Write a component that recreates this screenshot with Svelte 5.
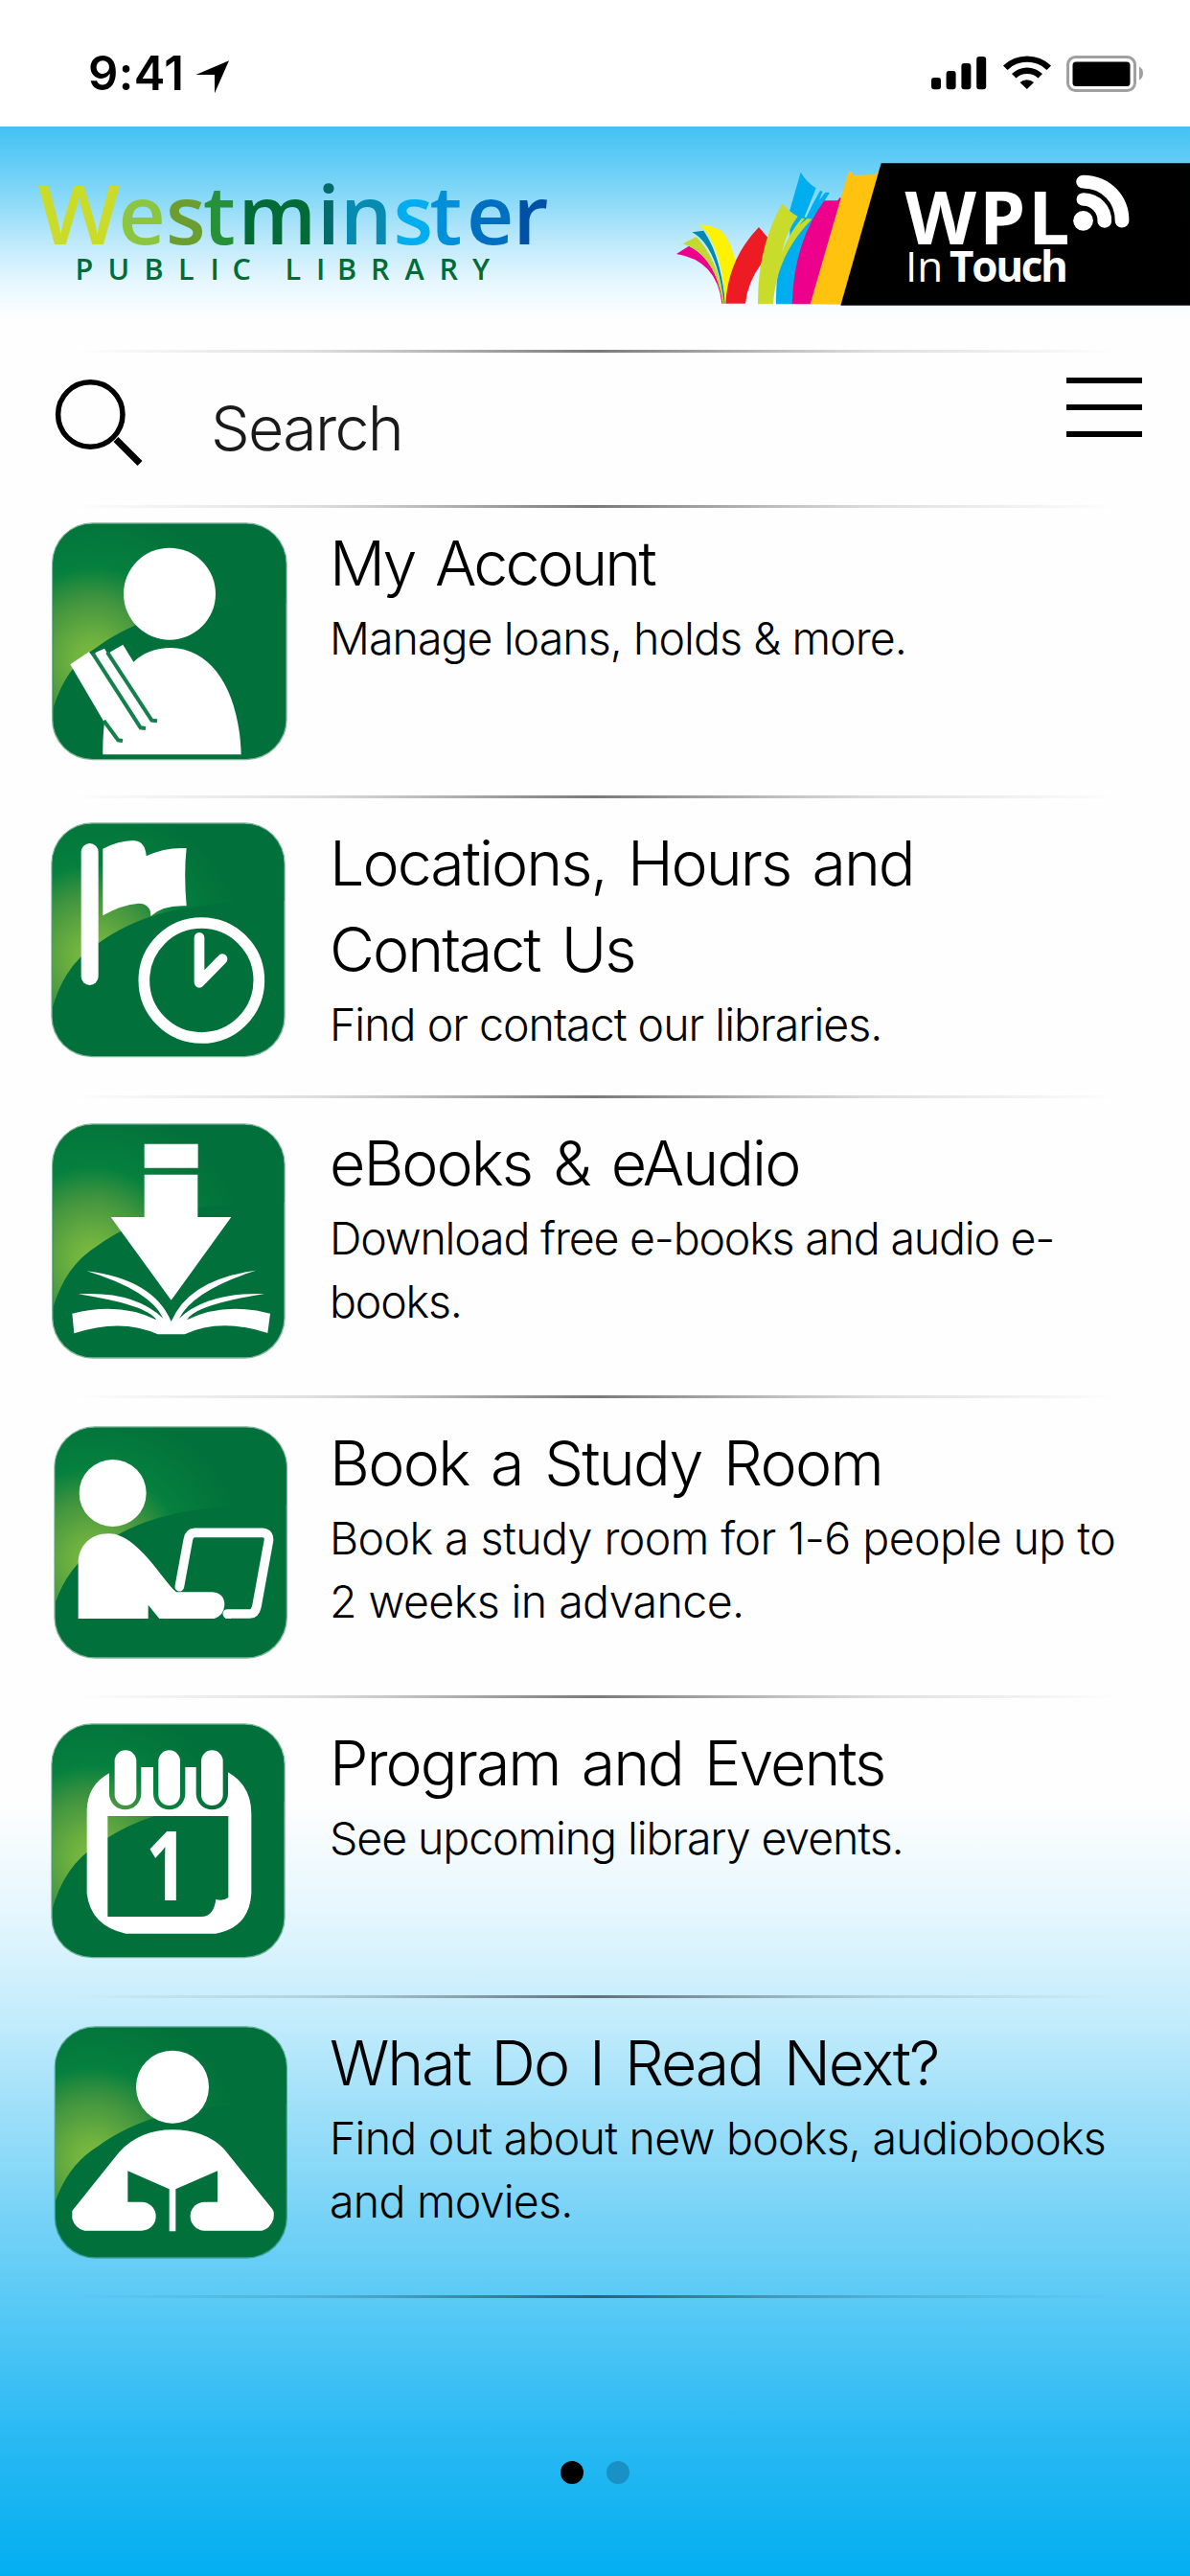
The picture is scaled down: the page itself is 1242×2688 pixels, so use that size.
<script lang="ts">
	type IconName = 'account' | 'location' | 'download' | 'study' | 'calendar' | 'reader';

	interface MenuItem {
		icon: IconName;
		title: string;
		text: string;
		tracking: [number, number];
		shift: number;
		box: [number, number, number, number];
	}

	// tracking: letter spacing of title and text; shift: vertical start of the artwork;
	// box: x, y, width, height of the tile
	const items: MenuItem[] = [
		{ icon: 'account', title: 'My Account', text: 'Manage loans, holds & more.', tracking: [-2.8, -0.95], shift: 0, box: [42, 46, 737, 744] },
		{ icon: 'location', title: 'Locations, Hours and Contact Us', text: 'Find or contact our libraries.', tracking: [-2, -1], shift: 9, box: [40, 55, 733, 735] },
		{ icon: 'download', title: 'eBooks & eAudio', text: 'Download free e-books and audio e-books.', tracking: [-2, -1.2], shift: 3, box: [42, 52, 731, 736] },
		{ icon: 'study', title: 'Book a Study Room', text: 'Book a study room for 1-6 people up to 2 weeks in advance.', tracking: [-1.7, -0.58], shift: -3, box: [49, 55, 731, 727] },
		{ icon: 'calendar', title: 'Program and Events', text: 'See upcoming library events.', tracking: [-2, -1.1], shift: 6, box: [40, 55, 733, 735] },
		{ icon: 'reader', title: 'What Do I Read Next?', text: 'Find out about new books, audiobooks and movies.', tracking: [-2.1, -0.76], shift: 0, box: [50, 58, 730, 727] }
	];

	const letters = [
		{ char: 'e', x: 123.5, color: '#8cc63f' },
		{ char: 's', x: 173, color: '#6b9e2e' },
		{ char: 't', x: 212, color: '#279139' },
		{ char: 'm', x: 248.5, color: '#026b36' },
		{ char: 'i', x: 331, color: '#036c6b' },
		{ char: 'n', x: 355, color: '#078bb0' },
		{ char: 's', x: 410.5, color: '#00aeef' },
		{ char: 't', x: 448.5, color: '#0090da' },
		{ char: 'e', x: 487, color: '#006fbf' },
		{ char: 'r', x: 535.5, color: '#0050a5' }
	];
</script>

<div class="screen">
	<div class="status">
		<div class="time">
			<span>9:41</span>
			<svg width="35" height="35" viewBox="204 63 35 35"><path d="M239 63.3L204.4 78H224V97.3z" /></svg>
		</div>
		<svg width="224" height="40" viewBox="970 57 224 40">
			<rect x="972" y="81" width="10" height="12.3" rx="3" />
			<rect x="987.6" y="74" width="10" height="19.3" rx="3" />
			<rect x="1003.4" y="66" width="10" height="27.3" rx="3" />
			<rect x="1019.2" y="59" width="10" height="34.3" rx="3" />
			<path d="M1047 68.5A36 36 0 0 1 1097 68.5L1092.5 73A29.5 29.5 0 0 0 1051.5 73z" />
			<path d="M1056 77A23 23 0 0 1 1088 77L1083.5 81.5A17 17 0 0 0 1060.5 81.5z" />
			<path d="M1064.500 86A11 11 0 0 1 1079 86L1071.800 93z" />
			<rect class="battery" x="1114.500" y="59.500" width="70" height="35" rx="8" />
			<rect x="1119.5" y="64.5" width="60" height="25.5" rx="3.5" />
			<path class="nub" d="M1189 69.5Q1193 71.5 1193 76.5T1189 83.5z" />
		</svg>
	</div>

	<header class="banner">
		<svg width="1242" height="233" viewBox="0 132 1242 233">
			<text class="brand" x="39.500" y="255.300" fill="#cadb2a" textLength="86" lengthAdjust="spacingAndGlyphs">W</text>
			<text class="brand" y="255.300">
				{#each letters as { char, x, color }}<tspan {x} fill={color}>{char}</tspan>{/each}
			</text>
			<text
				class="brand-sub"
				x="78.500 112.500 150.500 186 219.500 242.500 270 297.500 330 352 387 422.500 458.500 493"
				y="291.700">PUBLIC LIBRARY</text>

			<!-- row of books -->
			<g transform="translate(700 150) scale(0.33333)">
				<path fill="#ec008c" d="M18 345L57 320Q142 362 165 500H160Q145 365 18 345z" />
				<path fill="#c4d92e" d="M38 313L80 292Q150 362 168 500H163Q140 345 38 313z" />
				<path fill="#0089ae" d="M67 277L103 272Q157 350 171 500H167Q146 320 67 277z" />
				<path fill="#fff200" d="M90 253Q130 256 158 272Q186 300 204 370Q182 430 173 500H170Q162 320 90 253z" />
				<path fill="#ed1c24" d="M172 500Q180 360 276 261L306 296L286 372Q240 435 234 500z" />
				<path fill="#00aeef" d="M373 208L407 89Q425 120 455 139L419 229L424 231Q445 185 468 147L476 149L464 178L484 152L498 153Q395 300 382 502H330Q326 380 373 290z" />
				<path fill="#c9db2b" d="M273 502Q272 320 350 187Q370 214 398 227Q362 275 348 342Q365 290 410 233L420 234Q410 245 403 256Q415 244 428 234L442 236Q330 350 321 502z" />
				<path fill="#ec008c" d="M380 502Q385 310 481 178H522L530 168L536 172L440 502z" />
				<path fill="#ffc20e" d="M437 502L557 86L568 88L569 98Q610 99 640 96L650 86L654 88L533 503z" />
				<path fill="#000" d="M659 61H1626V506H532z" />
			</g>

			<text class="wpl" x="944.500 1022 1073" y="255.300">WPL</text>
			<text class="touch-light" x="945" y="293.700">In</text>
			<text class="touch" x="991" y="293.700" textLength="124">Touch</text>
			<g transform="translate(680 0) scale(0.35842 0.33333)">
				<ellipse cx="1257" cy="691" rx="29" ry="31" fill="#fff" />
				<path class="wave" d="M1258 624A62 66 0 0 1 1319 693" />
				<path class="wave" d="M1257 569C1325 570 1371 625 1370 692" />
			</g>
		</svg>
	</header>

	<div class="divider"></div>
	<div class="search">
		<svg class="glass" width="92" height="92" viewBox="57 395 92 92">
			<circle cx="94.300" cy="432.500" r="33.700" />
			<path d="M121 458.500L146 483.500" />
		</svg>
		<span>Search</span>
		<div class="menu">
			<i></i>
			<i></i>
			<i></i>
		</div>
	</div>
	<div class="divider"></div>

	<svg class="defs" width="0" height="0">
		<defs>
			<radialGradient id="glow" gradientUnits="userSpaceOnUse" cx="170" cy="475" r="480">
				<stop offset="0" stop-color="#7cbb3f" />
				<stop offset=".12" stop-color="#70b33f" />
				<stop offset=".25" stop-color="#5ba440" />
				<stop offset=".4" stop-color="#40943f" />
				<stop offset=".6" stop-color="#05803e" />
				<stop offset="1" stop-color="#02703a" />
			</radialGradient>
		</defs>
	</svg>

	<main>
		{#each items as item}
			{@const [x, y, w, h] = item.box}
			<section class="row">
				<svg class="tile" width="280" height="280" viewBox="0 {item.shift} 840 840">
					<clipPath id="clip-{item.icon}">
						<rect x={x + 4} y={y + 4} width={w - 8} height={h - 8} rx="124" />
					</clipPath>
					<rect {x} {y} width={w} height={h} rx="128" fill="#02703a" opacity=".5" />
					<g clip-path="url(#clip-{item.icon})">
						<rect width="840" height="840" fill="#02703a" />
						<path fill="url(#glow)" d="M40 650Q78 500 185 435C310 345 450 312 640 304L780 300V40H40z" />
					</g>
					{#if item.icon === 'account'}
						<circle class="white" cx="411" cy="269" r="144" />
						<path class="white" d="M202 772Q201 720 207 672L100 490L158 451L172 466L180 452L207 440L218 458L227 450L265 428L298 482Q345 438 415 438C548 440 630 580 635 772z" />
						<path class="cut" d="M205 666L250 727L264 729M170 455L320 688L336 690M216 452L355 665L372 667" />
					{:else if item.icon === 'location'}
						<rect class="white" x="134" y="120" width="54" height="444" rx="27" />
						<path class="white" d="M202 137Q250 112 298 111Q335 113 338 160Q395 132 464 135Q455 215 464 316Q390 312 352 348Q353 310 315 308Q260 312 202 346z" />
						<circle class="line" cx="511" cy="549" r="180" stroke-width="35" />
						<path class="line" d="M504 415V556L576 482" stroke-width="32" />
					{:else if item.icon === 'download'}
						<path class="white" d="M332 116H500V191H332zM332 212H499V345H604L416 605L227 345H332z" />
						<path class="white" d="M106 647Q255 610 370 667Q340 620 125 586Q300 575 391 662Q350 575 152 514Q360 540 416 672Q472 540 681 512Q485 575 441 662Q530 580 708 585Q490 620 465 667Q580 610 726 647L718 708Q570 660 458 712H374Q260 660 112 709z" />
					{:else if item.icon === 'study'}
						<circle class="white" cx="233" cy="264" r="105" />
						<path class="white" d="M125 657V485C124 430 165 391 218 391C306 385 390 540 432 574H545Q583 578 583 614Q581 646 551 657H379L344 614V657z" />
						<path class="line" d="M442 557L469 410Q473 388 490 388H702Q725 390 721 415L684 618Q679 642 662 642H592" stroke-width="29" stroke-linecap="butt" />
						<path class="white" d="M585 657L603 628V657z" />
					{:else if item.icon === 'calendar'}
						<path class="white" fill-rule="evenodd" d="M222 211V275A50 50 0 0 0 322 275V192H360V275A50 50 0 0 0 460 275V192H494V275A50 50 0 0 0 594 275V208Q667 250 667 338V588Q660 695 555 713H274Q165 690 152 588V325Q155 247 222 211zM217 345V660H510Q549 660 556 606Q580 612 595 600V345z" />
						<rect class="white" x="239" y="139" width="68" height="173" rx="34" />
						<rect class="white" x="376" y="139" width="68" height="173" rx="34" />
						<rect class="white" x="510" y="139" width="68" height="173" rx="34" />
						<text class="day" x="336" y="608" textLength="132" lengthAdjust="spacingAndGlyphs">1</text>
					{:else}
						<circle class="white" cx="420" cy="248" r="114" />
						<path class="white" d="M106 636L253 452Q318 382 420 382T581 442L733 631Q740 640 736 662Q725 692 700 698H518A45 45 0 0 1 524 608H561V511L430 568V700H410V568L280 511V608H323A45 45 0 0 1 323 698H145Q115 692 106 660z" />
					{/if}
				</svg>
				<div class="copy">
					<h2 style:letter-spacing="{item.tracking[0]}px">{item.title}</h2>
					<p style:letter-spacing="{item.tracking[1]}px">{item.text}</p>
				</div>
			</section>
			<div class="divider"></div>
		{/each}
	</main>

	<div class="pager">
		<i class="on"></i>
		<i></i>
	</div>
</div>

<style>
	:global(body) {
		margin: 0;
	}
	.screen {
		width: 1242px;
		height: 2688px;
		overflow: hidden;
		background: linear-gradient(
			to bottom,
			#fefefe 1880px,
			#e4f6fd 2000px,
			#c3ecfc 2106px,
			#a0e0f9 2196px,
			#72d1f6 2327px,
			#4bc5f5 2445px,
			#2bbaf3 2536px,
			#03aef0 2688px
		);
		color: #000;
		font-family: Inter, 'Liberation Sans', sans-serif;
		font-weight: 300;
	}
	svg {
		display: block;
		flex: none;
	}

	.status {
		box-sizing: border-box;
		height: 132px;
		padding: 57px 48px 0 92px;
		display: flex;
		justify-content: space-between;
		background: #fff;
	}
	.time {
		display: flex;
		gap: 12px;
		font-size: 49px;
		font-weight: 600;
		line-height: 40px;
		letter-spacing: 0.4px;
	}
	.time span {
		width: 100px;
		white-space: nowrap;
	}
	.time svg {
		margin-top: 6px;
	}
	.battery {
		fill: none;
		stroke: #a0a0a0;
		stroke-width: 3;
	}
	.nub {
		fill: #a0a0a0;
	}

	.banner {
		height: 233px;
		background: linear-gradient(to bottom, #43c2f3, #64cdf6 38px, #8edbf8 80px, #bde9fb 120px, #e4f6fe 160px, #f8fdff 190px, #fefefe 208px);
	}
	.brand {
		font: 600 85.5px 'Open Sans', sans-serif;
	}
	.brand-sub {
		font: 600 30.5px 'Open Sans', sans-serif;
		fill: #026b36;
	}
	.wpl {
		font: 700 77px 'Open Sans', sans-serif;
		fill: #fff;
	}
	.touch,
	.touch-light {
		font: 700 44px 'Open Sans', sans-serif;
		fill: #fff;
	}
	.touch-light {
		font-weight: 400;
	}
	.wave {
		fill: none;
		stroke: #fff;
		stroke-width: 41;
		stroke-linecap: round;
	}

	.divider {
		height: 3px;
		background: linear-gradient(
			to right,
			transparent 6%,
			rgba(0, 0, 0, 0.12) 26%,
			rgba(0, 0, 0, 0.22) 33%,
			rgba(0, 0, 0, 0.52) 50%,
			rgba(0, 0, 0, 0.22) 67%,
			rgba(0, 0, 0, 0.12) 74%,
			transparent 94%
		);
	}
	.search {
		height: 159px;
		display: flex;
		align-items: flex-start;
	}
	.glass {
		margin: 27px 71px 0 57px;
		fill: none;
		stroke: #000;
		stroke-width: 5.5;
	}
	.glass path {
		stroke-width: 7;
	}
	.search span {
		flex: 1;
		padding-top: 34px;
		font-size: 64.5px;
		line-height: 90px;
		letter-spacing: -1.7px;
		color: #1a1a1a;
	}
	.menu {
		width: 79px;
		margin: 26px 50px 0 0;
		display: flex;
		flex-direction: column;
		gap: 22px;
	}
	.menu i {
		height: 6px;
		background: #000;
	}

	.defs {
		position: absolute;
	}
	.row {
		height: 300px;
		display: flex;
		padding-left: 40px;
	}
	.row:not(:first-child) {
		margin-top: 10px;
	}
	.tile {
		margin-right: 24px;
	}
	.white {
		fill: #fff;
	}
	.cut {
		fill: none;
		stroke: #14804c;
		stroke-width: 12;
	}
	.line {
		fill: none;
		stroke: #fff;
		stroke-linecap: round;
		stroke-linejoin: round;
	}
	.day {
		font: 700 300px 'Open Sans', sans-serif;
		fill: #fff;
	}
	.copy {
		width: 830px;
		padding-top: 13px;
	}
	h2 {
		margin: 0;
		font-size: 64.5px;
		font-weight: 300;
		line-height: 90px;
		word-spacing: 6px;
	}
	p {
		margin: 0;
		font-size: 46.5px;
		line-height: 66px;
	}

	.pager {
		margin-top: 170px;
		display: flex;
		justify-content: center;
		gap: 24px;
	}
	.pager i {
		width: 24px;
		height: 24px;
		border-radius: 50%;
		background: #1a91c4;
	}
	.pager .on {
		background: #000;
	}
</style>
